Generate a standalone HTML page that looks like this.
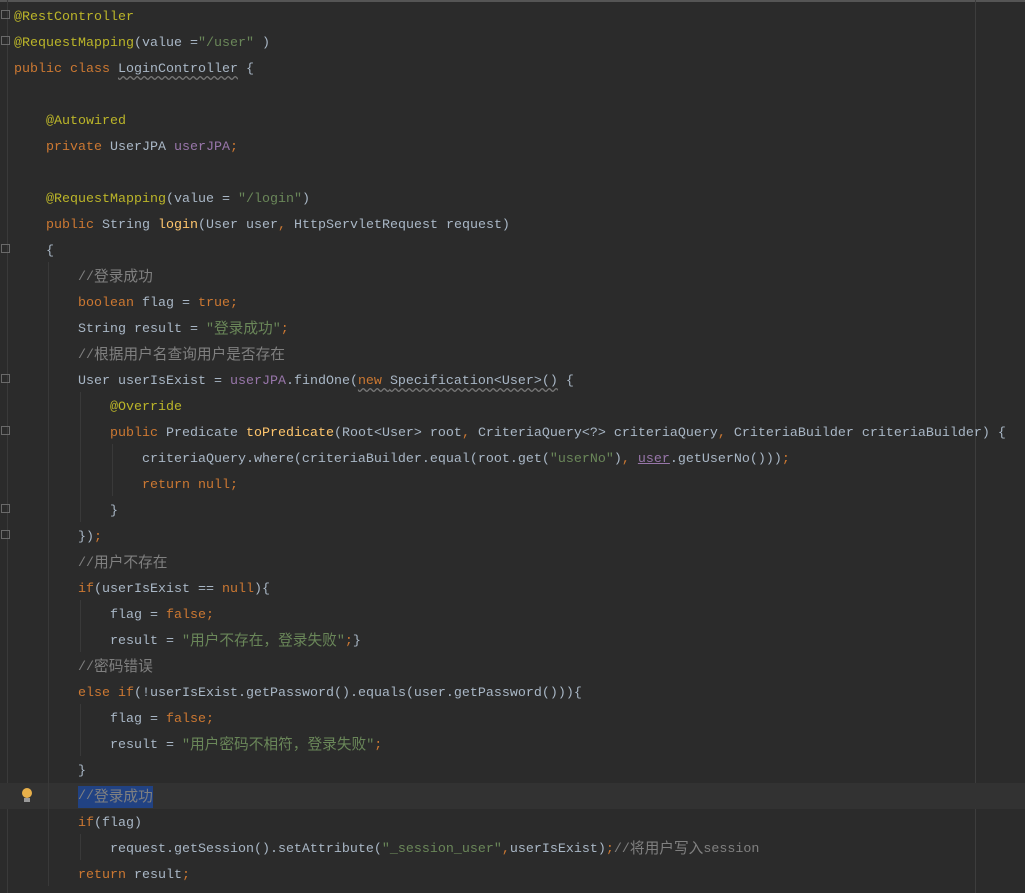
<!DOCTYPE html>
<html><head><meta charset="utf-8"><style>
html,body{margin:0;padding:0;}
body{width:1025px;height:893px;background:#2b2b2b;position:relative;overflow:hidden;font-family:"Liberation Mono","Noto Sans CJK SC",monospace;font-size:13.33px;color:#a9b7c6;}
.top{position:absolute;left:0;top:0;width:1025px;height:2px;background:#555;}
.gut{position:absolute;left:7px;top:0;width:1px;height:893px;background:#3a3a3a;}
.rm{position:absolute;left:975px;top:0;width:1px;height:893px;background:#3d3d3d;}
.cur{position:absolute;left:0;top:783px;width:1025px;height:26px;background:#323232;}
.l{position:absolute;left:14px;height:26px;line-height:26px;white-space:pre;overflow:visible;}
.g{position:absolute;width:1px;background:#393939;}
.k{color:#cc7832}.a{color:#bbb529}.s{color:#6a8759}.c{color:#808080}.f{color:#9876aa}.m{color:#ffc66d}
.z{font-size:14.7px;font-family:"Noto Sans CJK SC",sans-serif;display:inline-block;height:26px;line-height:26px;vertical-align:top;position:relative;top:-2px}
.w{text-decoration:underline wavy #777;text-underline-offset:3px}
.u{text-decoration:underline}
.sel{background:#214283;display:inline-block;height:22px;line-height:22px;vertical-align:top;margin-top:1px}
.sel .z{height:22px;line-height:22px;top:-1px}
.fold{position:absolute;left:1px;width:9px;height:9px;border:1px solid #6a6a6a;box-sizing:border-box;}
</style></head><body>
<div class="top"></div>
<div class="gut"></div>
<div class="rm"></div>
<div class="cur"></div>
<div class="g" style="left:48px;top:262px;height:624px"></div>
<div class="g" style="left:80px;top:392px;height:130px"></div>
<div class="g" style="left:112px;top:444px;height:52px"></div>
<div class="g" style="left:80px;top:600px;height:52px"></div>
<div class="g" style="left:80px;top:704px;height:52px"></div>
<div class="g" style="left:80px;top:834px;height:26px"></div>
<div class="fold" style="top:10px"></div>
<div class="fold" style="top:36px"></div>
<div class="fold" style="top:244px"></div>
<div class="fold" style="top:374px"></div>
<div class="fold" style="top:426px"></div>
<div class="fold" style="top:504px"></div>
<div class="fold" style="top:530px"></div>
<div style="position:absolute;left:22px;top:788px;width:10px;height:10px;border-radius:50%;background:#e8b04a"></div>
<div style="position:absolute;left:24px;top:798px;width:6px;height:4px;background:#999"></div>

<div class="l" style="top:5px"><span class="a">@RestController</span></div>
<div class="l" style="top:31px"><span class="a">@RequestMapping</span>(value =<span class="s">"/user"</span> )</div>
<div class="l" style="top:57px"><span class="k">public class </span><span class="w">LoginController</span> {</div>
<div class="l" style="top:109px">    <span class="a">@Autowired</span></div>
<div class="l" style="top:135px">    <span class="k">private </span>UserJPA <span class="f">userJPA</span><span class="k">;</span></div>
<div class="l" style="top:187px">    <span class="a">@RequestMapping</span>(value = <span class="s">"/login"</span>)</div>
<div class="l" style="top:213px">    <span class="k">public </span>String <span class="m">login</span>(User user<span class="k">, </span>HttpServletRequest request)</div>
<div class="l" style="top:239px">    {</div>
<div class="l" style="top:265px">        <span class="c">//<span class="z">登录成功</span></span></div>
<div class="l" style="top:291px">        <span class="k">boolean </span>flag = <span class="k">true;</span></div>
<div class="l" style="top:317px">        String result = <span class="s">"<span class="z">登录成功</span>"</span><span class="k">;</span></div>
<div class="l" style="top:343px">        <span class="c">//<span class="z">根据用户名查询用户是否存在</span></span></div>
<div class="l" style="top:369px">        User userIsExist = <span class="f">userJPA</span>.findOne(<span class="w"><span class="k">new </span>Specification&lt;User&gt;()</span> {</div>
<div class="l" style="top:395px">            <span class="a">@Override</span></div>
<div class="l" style="top:421px">            <span class="k">public </span>Predicate <span class="m">toPredicate</span>(Root&lt;User&gt; root<span class="k">, </span>CriteriaQuery&lt;?&gt; criteriaQuery<span class="k">, </span>CriteriaBuilder criteriaBuilder) {</div>
<div class="l" style="top:447px">                criteriaQuery.where(criteriaBuilder.equal(root.get(<span class="s">"userNo"</span>)<span class="k">, </span><span class="f u">user</span>.getUserNo()))<span class="k">;</span></div>
<div class="l" style="top:473px">                <span class="k">return null;</span></div>
<div class="l" style="top:499px">            }</div>
<div class="l" style="top:525px">        })<span class="k">;</span></div>
<div class="l" style="top:551px">        <span class="c">//<span class="z">用户不存在</span></span></div>
<div class="l" style="top:577px">        <span class="k">if</span>(userIsExist == <span class="k">null</span>){</div>
<div class="l" style="top:603px">            flag = <span class="k">false;</span></div>
<div class="l" style="top:629px">            result = <span class="s">"<span class="z">用户不存在，登录失败</span>"</span><span class="k">;</span>}</div>
<div class="l" style="top:655px">        <span class="c">//<span class="z">密码错误</span></span></div>
<div class="l" style="top:681px">        <span class="k">else if</span>(!userIsExist.getPassword().equals(user.getPassword())){</div>
<div class="l" style="top:707px">            flag = <span class="k">false;</span></div>
<div class="l" style="top:733px">            result = <span class="s">"<span class="z">用户密码不相符，登录失败</span>"</span><span class="k">;</span></div>
<div class="l" style="top:759px">        }</div>
<div class="l" style="top:785px">        <span class="c sel">//<span class="z">登录成功</span></span></div>
<div class="l" style="top:811px">        <span class="k">if</span>(flag)</div>
<div class="l" style="top:837px">            request.getSession().setAttribute(<span class="s">"_session_user"</span><span class="k">,</span>userIsExist)<span class="k">;</span><span class="c">//<span class="z">将用户写入</span>session</span></div>
<div class="l" style="top:863px">        <span class="k">return </span>result<span class="k">;</span></div>
</body></html>
